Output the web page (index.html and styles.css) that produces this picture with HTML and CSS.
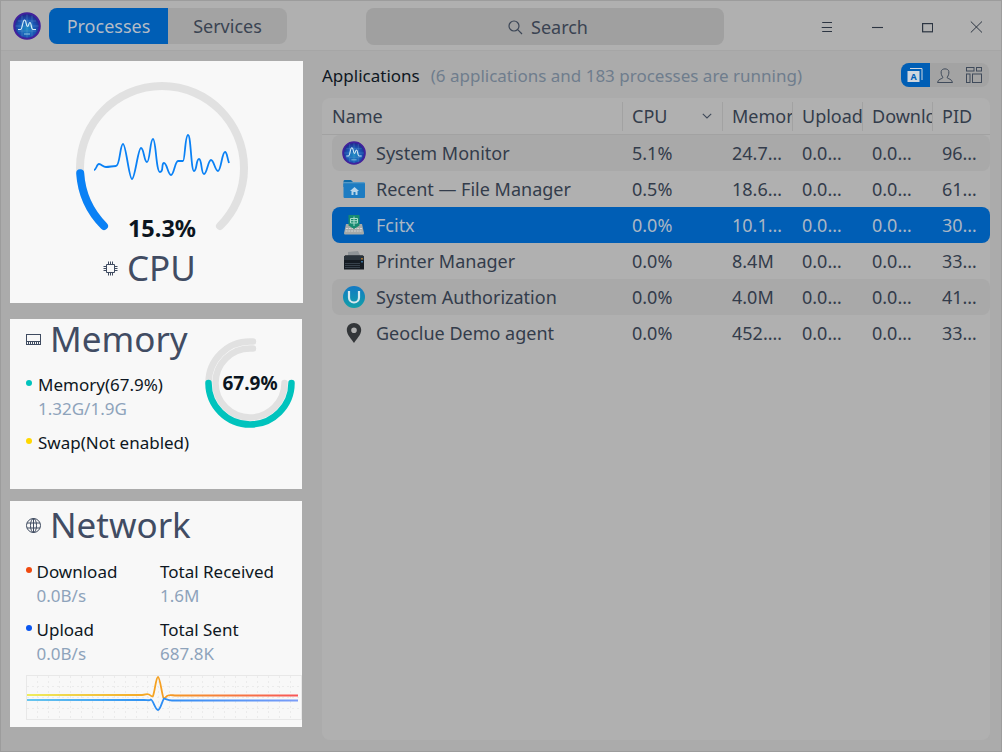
FILE: index.html
```html
<!DOCTYPE html>
<html lang="en">
<head>
<meta charset="utf-8">
<title>System Monitor</title>
<link rel="stylesheet" href="styles.css">
</head>
<body>
<svg class="defs" width="0" height="0" aria-hidden="true">
  <defs>
    <radialGradient id="monBg" cx="50%" cy="60%" r="55%">
      <stop offset="0" stop-color="#1c8ec4"/><stop offset="0.6" stop-color="#1a56b4"/><stop offset="1" stop-color="#1e2a8c"/>
    </radialGradient>
    <linearGradient id="uBg" x1="0" y1="0" x2="0" y2="1">
      <stop offset="0" stop-color="#1379c4"/><stop offset="1" stop-color="#11a0a8"/>
    </linearGradient>
    <linearGradient id="trA" gradientUnits="userSpaceOnUse" x1="0" y1="0" x2="275" y2="0">
      <stop offset="0" stop-color="#eeee5e"/><stop offset="0.48" stop-color="#f5a020"/><stop offset="1" stop-color="#f8555a"/>
    </linearGradient>
    <linearGradient id="trB" gradientUnits="userSpaceOnUse" x1="0" y1="0" x2="275" y2="0">
      <stop offset="0" stop-color="#68c6ee"/><stop offset="0.48" stop-color="#2a8cf4"/><stop offset="1" stop-color="#7d9df8"/>
    </linearGradient>
    <symbol id="monitor" viewBox="0 0 28 28">
      <circle cx="14" cy="14" r="12.800" fill="url(#monBg)" stroke="#42219c" stroke-width="2"/>
      <path d="M14 2.500V25.500M2.500 14H25.500M5 9H23M5 19H23M9 3.500V24.500M19 3.500V24.500" stroke="#5f9ad0" stroke-width=".4" fill="none"/>
      <path d="M5 17.500H7.500C9.500 17.500 9.500 8 11.500 8S13 14.500 14.500 14.500 15.500 10.500 17 10.500 18 17.500 20 17.500H23" stroke="#d6eef6" stroke-width="1.200" fill="none"/>
      <path d="M11 22H17" stroke="#8fc4e0" stroke-width="1"/>
    </symbol>
  </defs>
</svg>

<div class="window">
  <header class="titlebar">
    <svg class="app-logo" width="28" height="28"><use href="#monitor"/></svg>
    <nav class="tabs">
      <button class="tab tab-on">Processes</button>
      <button class="tab">Services</button>
    </nav>
    <div class="search">
      <svg width="16" height="16" viewBox="0 0 16 16" fill="none" stroke="#3c4656" stroke-width="1.2"><circle cx="7" cy="7" r="5"/><path d="M10.700 10.700 15 15"/></svg>
      <span>Search</span>
    </div>
    <div class="winbtns">
      <button class="winbtn"><svg width="14" height="14" viewBox="0 0 14 14" fill="none" stroke="#2c3542" stroke-width="1.100"><path d="M3.200 3.500H13M2.700 8.500H13M3.200 12.500H13"/></svg></button>
      <button class="winbtn"><svg width="14" height="14" viewBox="0 0 14 14" fill="none" stroke="#2c3542" stroke-width="1.100"><path d="M3 8.500H14"/></svg></button>
      <button class="winbtn"><svg width="14" height="14" viewBox="0 0 14 14" fill="none" stroke="#2c3542" stroke-width="1.200"><rect x="3.600" y="4.600" width="10" height="8.200"/></svg></button>
      <button class="winbtn"><svg width="14" height="14" viewBox="0 0 14 14" fill="none" stroke="#2c3542" stroke-width="1"><path d="M1.800 2.500 13 13.500M13 2.500 1.800 13.500"/></svg></button>
    </div>
  </header>

  <div class="content">
    <aside class="side">
      <section class="card card-cpu">
        <div class="gauge">
          <svg width="293" height="190" viewBox="0 0 293 190" fill="none" stroke-linecap="round">
            <path d="M94 165A82 82 0 1 1 210 165" stroke="#e1e1e1" stroke-width="8"/>
            <path d="M70.200 112.300A82 82 0 0 0 94 165" stroke="#0a81f5" stroke-width="8"/>
            <path d="M84 109C86.500 109 86.500 103 89 103S93 106 96 106 103 105 106 105C110 105 110 83 113 83S119 118 122 118 128 87 131 87 134 101 137 101C140 101 140 78 143 78S146 111 150 111 151 102 154 102 158 114 161 114 165 100 168 100 170 100 173 100C175 100 175 74 178 74S181 110 184 110 186 98 189 98 191 113 194 113 198 99 201 99 205 110 208 110 212 91 215 91C217 91 217 96 219 102" stroke="#0a81f5" stroke-width="1.800" stroke-linecap="butt"/>
          </svg>
          <strong class="gauge-value">15.3%</strong>
        </div>
        <div class="cpu-title">
          <svg width="15" height="15" viewBox="0 0 15 15" fill="none" stroke="#3f4b60" stroke-width="1"><path d="M3.500 3.500H11.500V11.500H3.500ZM5.500 .5V3.500M7.500 .5V3.500M9.500 .5V3.500M5.500 11.500V14.500M7.500 11.500V14.500M9.500 11.500V14.500M.5 5.500H3.500M.5 7.500H3.500M.5 9.500H3.500M11.500 5.500H14.500M11.500 7.500H14.500M11.500 9.500H14.500"/></svg>
          <h2 class="card-title">CPU</h2>
        </div>
      </section>

      <section class="card card-mem">
        <div class="mem-info">
          <div class="title-row">
            <svg width="15" height="15" viewBox="0 0 15 15" fill="none" stroke="#3f4b60" stroke-width="1"><rect x=".5" y="2.500" width="14" height="10"/><path d="M.5 9.500H14.500M2.500 10V12.500M4.500 10V12.500M6.500 10V12.500M8.500 10V12.500M10.500 10V12.500M12.500 10V12.500"/></svg>
            <h2 class="card-title">Memory</h2>
          </div>
          <div class="legend legend-mem">
            <div class="label"><i class="dot dot-teal"></i>Memory(67.9%)</div>
            <div class="value">1.32G/1.9G</div>
          </div>
          <div class="legend legend-swap">
            <div class="label"><i class="dot dot-yellow"></i>Swap(Not enabled)</div>
          </div>
        </div>
        <div class="ring">
          <svg width="90" height="90" viewBox="0 0 90 90" fill="none" stroke-linecap="round">
            <path d="M3.500 45A41.500 41.500 0 0 1 45 3.500H48" stroke="#e1e1e1" stroke-width="6.500"/>
            <path d="M45 10.500H48M45 10.500A34.500 34.500 0 1 0 79.500 45" stroke="#e1e1e1" stroke-width="6.500"/>
            <path d="M86.500 45A41.500 41.500 0 0 1 3.500 45" stroke="#00c3bd" stroke-width="6.500"/>
          </svg>
          <strong class="ring-value">67.9%</strong>
        </div>
      </section>

      <section class="card card-net">
        <div class="title-row">
          <svg width="15" height="15" viewBox="0 0 15 15" fill="none" stroke="#3f4b60" stroke-width="1"><circle cx="7.500" cy="7.500" r="7"/><ellipse cx="7.500" cy="7.500" rx="3" ry="7"/><path d="M7.500 .5V14.500M1 5H14M1 10H14"/></svg>
          <h2 class="card-title">Network</h2>
        </div>
        <div class="stats">
          <div class="stat"><div class="label"><i class="dot dot-red"></i>Download</div><div class="value">0.0B/s</div></div>
          <div class="stat"><div class="label">Total Received</div><div class="value value-total">1.6M</div></div>
          <div class="stat"><div class="label"><i class="dot dot-blue"></i>Upload</div><div class="value">0.0B/s</div></div>
          <div class="stat"><div class="label">Total Sent</div><div class="value value-total">687.8K</div></div>
        </div>
        <svg class="netchart" width="276" height="45" viewBox="0 0 276 45" fill="none">
          <path d="M11.500 1V44M22.500 1V44M33.500 1V44M44.500 1V44M55.500 1V44M66.500 1V44M77.500 1V44M88.500 1V44M99.500 1V44M110.500 1V44M121.500 1V44M132.500 1V44M143.500 1V44M154.500 1V44M165.500 1V44M176.500 1V44M187.500 1V44M198.500 1V44M209.500 1V44M220.500 1V44M231.500 1V44M242.500 1V44M253.500 1V44M264.500 1V44M1 11.500H275M1 22.500H275M1 33.500H275" stroke="#ebebeb" stroke-dasharray="2 3"/>
          <rect x=".5" y=".5" width="275" height="44" stroke="#e8e8e8"/>
          <path d="M1 20H116C120 20 120 18.500 123 19.500 125.500 20.500 125.500 22.500 127 21 129 16 130 2 132 2S136 20 137.500 23C139 24 140 21 142 20.500 144 19.500 147 20.500 150 20.500H272" stroke="url(#trA)" stroke-width="1.800"/>
          <path d="M1 25H118C122 25 123 26 125 24.500 127 25 129.500 35 132 35S136 26 138 23.500C140 24 142 25.500 146 25.500H272" stroke="url(#trB)" stroke-width="1.800"/>
        </svg>
      </section>
    </aside>

    <main class="main">
      <div class="main-head">
        <h1 class="heading">Applications</h1>
        <span class="subhead">(6 applications and 183 processes are running)</span>
        <div class="views">
          <button class="view view-on"><svg width="18" height="18" viewBox="0 0 18 18"><path d="M4 2.500H16V14" fill="none" stroke="#cfd6de" stroke-width="1"/><rect x="1.500" y="5" width="12" height="11" fill="#cfd6de"/><text x="7.500" y="14" class="view-a">A</text></svg></button>
          <button class="view"><svg width="18" height="18" viewBox="0 0 18 18" fill="none" stroke="#3f4a5a" stroke-width="1"><path d="M1.500 16.500C2 13 6 13 7 11.500 5.500 9.500 5 8 5.200 5.500 5.500 2 12.500 2 12.800 5.500 13 8 12.500 9.500 11 11.500 12 13 16 13 16.500 16.500Z"/></svg></button>
          <button class="view"><svg width="18" height="18" viewBox="0 0 18 18" fill="none" stroke="#3f4a5a" stroke-width="1"><rect x="1.500" y="1.500" width="7.500" height="3.500"/><rect x="11.500" y="1.500" width="5" height="3.500"/><rect x="1.500" y="8" width="3.500" height="8.500"/><rect x="7.500" y="8" width="9" height="8.500"/></svg></button>
        </div>
      </div>

      <div class="table">
        <div class="thead">
          <div class="th">Name</div>
          <div class="th th-sep th-cpu">CPU<svg width="10" height="6" viewBox="0 0 10 6" fill="none" stroke="#3f4a5a" stroke-width="1.100"><path d="M.8.8 5 5 9.200.8"/></svg></div>
          <div class="th th-sep">Memory</div>
          <div class="th th-sep">Upload</div>
          <div class="th th-sep">Download</div>
          <div class="th th-sep">PID</div>
        </div>

        <div class="tr stripe">
          <div class="td name"><svg class="ico" width="24" height="24"><use href="#monitor"/></svg>System Monitor</div>
          <div class="td">5.1%</div><div class="td">24.7…</div><div class="td">0.0…</div><div class="td">0.0…</div><div class="td">96…</div>
        </div>
        <div class="tr">
          <div class="td name">
            <svg class="ico" width="24" height="24" viewBox="0 0 24 24"><path d="M1.500 4.500C1.500 3.500 2 3 3 3H9L11 5H21.500C22.500 5 23 5.500 23 6.500V10H1.500Z" fill="#0f6ba8"/><path d="M1.500 6.500H23V19.500C23 20.500 22.500 21 21.500 21H3C2 21 1.500 20.500 1.500 19.500Z" fill="#1d7cc2"/><path d="M1.500 5.800H23" stroke="#8dbfe0" stroke-width=".8"/><path d="M12.500 10 8 14H9.500V18H15.500V14H17Z" fill="#b9d6ea"/><rect x="11.500" y="15" width="2" height="3" fill="#1d7cc2"/></svg>
            Recent — File Manager</div>
          <div class="td">0.5%</div><div class="td">18.6…</div><div class="td">0.0…</div><div class="td">0.0…</div><div class="td">61…</div>
        </div>
        <div class="tr selected">
          <div class="td name">
            <svg class="ico" width="24" height="24" viewBox="0 0 24 24"><path d="M4 11H20L22 20C22 21 21.500 21.500 20.500 21.500H3.500C2.500 21.500 2 21 2 20Z" fill="#a5a9a8"/><path d="M4 15.500H20M3.500 18H20.500" stroke="#d6d8d6" stroke-width="1.200" stroke-dasharray="2 .8"/><path d="M6.500 2H17.500V12.500L12 16 6.500 12.500Z" fill="#168a70"/><path d="M8.500 5.500H15.500V10H8.500ZM12 3.500V13M8.500 7.700H15.500" fill="none" stroke="#a8dccb" stroke-width="1"/></svg>
            Fcitx</div>
          <div class="td">0.0%</div><div class="td">10.1…</div><div class="td">0.0…</div><div class="td">0.0…</div><div class="td">30…</div>
        </div>
        <div class="tr">
          <div class="td name">
            <svg class="ico" width="24" height="24" viewBox="0 0 24 24"><path d="M6 3 16 2 18 6V9H6Z" fill="#8f9498"/><path d="M2 8C2 7 3 6.500 4 6.500H20C21 6.500 22 7 22 8V20.500H2Z" fill="#151b22"/><path d="M2 8C2 7 3 6.500 4 6.500H20C21 6.500 22 7 22 8V11H2Z" fill="#2a333b"/><path d="M3 14.500H18M3 16.500H18M3 18.500H18" stroke="#3b4650" stroke-width=".9"/><path d="M20 9V10.500" stroke="#d9902e" stroke-width="1.400"/><path d="M20 12V13.500" stroke="#4a94c9" stroke-width="1.400"/></svg>
            Printer Manager</div>
          <div class="td">0.0%</div><div class="td">8.4M</div><div class="td">0.0…</div><div class="td">0.0…</div><div class="td">33…</div>
        </div>
        <div class="tr stripe">
          <div class="td name">
            <svg class="ico" width="24" height="24" viewBox="0 0 24 24"><circle cx="12" cy="12" r="11" fill="url(#uBg)"/><path d="M7 6V12.500A5 5 0 0 0 17 12.500V6" fill="none" stroke="#d6e8ee" stroke-width="2.200"/></svg>
            System Authorization</div>
          <div class="td">0.0%</div><div class="td">4.0M</div><div class="td">0.0…</div><div class="td">0.0…</div><div class="td">41…</div>
        </div>
        <div class="tr">
          <div class="td name">
            <svg class="ico" width="24" height="24" viewBox="0 0 24 24"><path fill-rule="evenodd" d="M12 2C7.800 2 4.800 5 4.800 9 4.800 14 10 18.500 12 22 14 18.500 19.200 14 19.200 9 19.200 5 16.200 2 12 2ZM12 6.500A2.800 2.800 0 1 1 12 12.100 2.800 2.800 0 0 1 12 6.500Z" fill="#333639"/></svg>
            Geoclue Demo agent</div>
          <div class="td">0.0%</div><div class="td">452.…</div><div class="td">0.0…</div><div class="td">0.0…</div><div class="td">33…</div>
        </div>
      </div>
    </main>
  </div>
</div>
</body>
</html>
```

FILE: styles.css
```css
* { box-sizing: border-box; }
html, body { margin: 0; padding: 0; }
body {
  width: 1002px;
  height: 752px;
  overflow: hidden;
  font-family: "Noto Sans", sans-serif;
  font-size: 17px;
  background: #ababab;
}
.defs { display: block; height: 0; }
button { font: inherit; border: 0; padding: 0; background: none; }
h1, h2 { margin: 0; font-weight: 400; }

.window {
  width: 1002px;
  height: 752px;
  background: #ababab;
  border: 1px solid #9c9c9c;
  display: flex;
  flex-direction: column;
}

/* title bar */
.titlebar {
  height: 50px;
  flex: none;
  background: #b0b0b0;
  border-bottom: 1px solid #a6a6a6;
  display: flex;
  align-items: flex-start;
  padding: 7px 0 0 12px;
}
.titlebar > * { flex: none; }
.app-logo { margin-top: 4px; }
.tabs {
  display: flex;
  margin-left: 8px;
  height: 36px;
  border-radius: 8px;
  overflow: hidden;
  background: #a3a3a3;
}
.tab {
  width: 119px;
  font-size: 18px;
  color: #3a4352;
}
.tab-on { background: #005eb5; color: #b4bcc6; }
.search {
  width: 358px;
  height: 37px;
  margin-left: 79px;
  padding-left: 5px;
  border-radius: 8px;
  background: #a0a0a0;
  color: #3a4352;
  font-size: 18px;
  display: flex;
  align-items: center;
  justify-content: center;
  gap: 8px;
}
.winbtns { display: flex; margin-left: 77px; }
.winbtn {
  width: 50px;
  height: 36px;
  display: flex;
  align-items: center;
  justify-content: center;
}

/* layout */
.content { flex: 1; display: flex; min-height: 0; }
.side {
  width: 321px;
  flex: none;
  padding: 10px 0 0 9px;
  display: flex;
  flex-direction: column;
}
.card { background: #f8f8f8; width: 292px; }
.card-title { font-size: 35px; line-height: 40px; color: #414c63; }
.title-row { display: flex; align-items: center; gap: 9px; height: 40px; }
.label { color: #0e1722; line-height: 24px; white-space: nowrap; }
.value { color: #8ea3bb; line-height: 24px; white-space: nowrap; }
.dot {
  display: inline-block;
  width: 6px;
  height: 6px;
  border-radius: 50%;
  vertical-align: 5px;
}
.dot-teal { background: #00c3bd; margin-right: 6px; }
.dot-yellow { background: #ffd800; margin-right: 6px; }
.dot-red { background: #f04a0f; margin-right: 4.500px; }
.dot-blue { background: #0a56f0; margin-right: 4.500px; }

/* cpu card */
.card-cpu { width: 293px; height: 242px; }
.gauge { position: relative; height: 187px; }
.gauge svg { display: block; }
.gauge-value {
  position: absolute;
  left: 0;
  width: 304px;
  top: 151px;
  text-align: center;
  font-size: 23.500px;
  line-height: 32px;
  font-weight: 700;
  color: #0b1520;
}
.cpu-title {
  display: flex;
  align-items: center;
  gap: 9px;
  padding-left: 93px;
}

/* memory card */
.card-mem {
  height: 170px;
  margin-top: 16px;
  padding: 0 0 0 16px;
  display: flex;
}
.mem-info { width: 179px; flex: none; }
.legend-mem { margin-top: 14px; }
.legend-mem .value { padding-left: 12px; }
.legend-swap { margin-top: 10px; }
.ring { position: relative; margin-top: 19px; width: 90px; height: 90px; }
.ring svg { display: block; }
.ring-value {
  position: absolute;
  left: 0;
  right: 0;
  top: 32px;
  text-align: center;
  font-size: 19px;
  line-height: 26px;
  font-weight: 700;
  color: #0b1520;
}

/* network card */
.card-net {
  height: 226px;
  margin-top: 12px;
  padding: 4px 0 0 16px;
  overflow: hidden;
}
.stats {
  display: grid;
  grid-template-columns: 134px 1fr;
  row-gap: 10px;
  margin-top: 15px;
}
.stat .value { padding-left: 10.500px; }
.stat .value-total { padding-left: 0; }
.netchart { display: block; margin-top: 9px; }

/* main */
.main { flex: 1; padding-right: 11px; min-width: 0; display: flex; flex-direction: column; }
.main-head {
  display: flex;
  align-items: center;
  height: 47px;
  flex: none;
}
.heading { font-size: 17px; color: #0e1722; margin: 2px 11px 0 0; }
.subhead { color: #6f7d8d; margin-top: 2px; }
.views {
  margin-left: auto;
  margin-right: 1px;
  display: flex;
  height: 24px;
  border-radius: 8px;
  overflow: hidden;
  background: #a3a3a3;
}
.view {
  width: 29.500px;
  display: flex;
  align-items: center;
  justify-content: center;
}
.view-on { background: #005eb5; }
.view-a { font-size: 9px; font-weight: 700; fill: #005eb5; text-anchor: middle; font-family: "Noto Sans", sans-serif; }

/* table */
.table {
  width: 668px;
  flex: 1;
  margin-bottom: 11px;
  background: #b0b0b0;
  border-radius: 8px;
}
.thead, .tr {
  display: grid;
  grid-template-columns: 300px 100px 70px 70px 70px 58px;
}
.thead {
  height: 37px;
  border-bottom: 1px solid #a2a2a2;
  align-items: center;
}
.th {
  height: 29px;
  line-height: 29px;
  padding-left: 10px;
  color: #333c4b;
  overflow: hidden;
  white-space: nowrap;
  font-size: 18px;
}
.th-sep { border-left: 1px solid #a2a2a2; padding-left: 9px; }
.th-cpu { display: flex; justify-content: space-between; align-items: center; padding-right: 10px; }
.tr {
  height: 36px;
  margin-left: 10px;
  grid-template-columns: 290px 100px 70px 70px 70px 58px;
  align-items: center;
  color: #333c4b;
  border-radius: 8px;
  font-size: 18px;
}
.stripe { background: #a9a9a9; }
.selected { background: #005eb5; color: #aab6c4; }
.td { padding-left: 10px; white-space: nowrap; overflow: hidden; }
.name { display: flex; align-items: center; gap: 10px; }
.ico { flex: none; }
```
